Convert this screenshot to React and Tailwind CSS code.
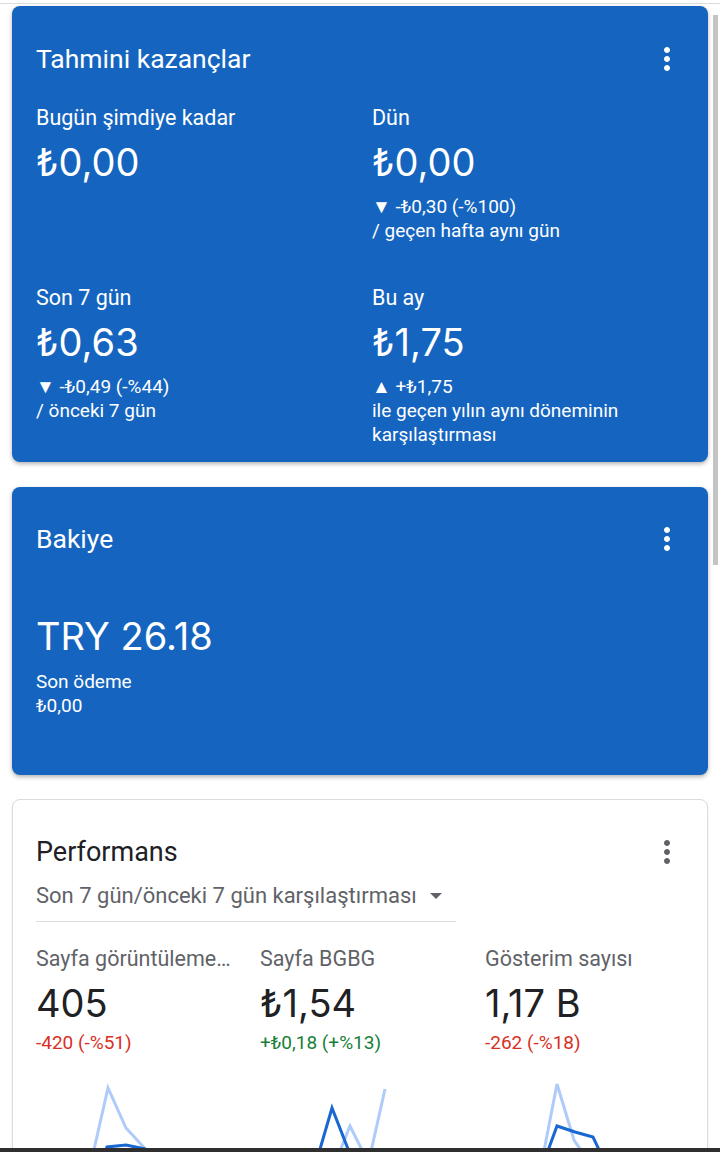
import React from 'react';

const font = { fontFamily: 'Roboto, "Noto Sans", sans-serif' };
const numFont = { fontFamily: 'Inter, Roboto, "Noto Sans", sans-serif' };

// vertical three-dot menu
const MoreIcon = ({ className }) => (
    <svg viewBox="0 0 24 24" className={className} fill="currentColor">
        <path d="M12 8c1.1 0 2-.9 2-2s-.9-2-2-2-2 .9-2 2 .9 2 2 2zm0 2c-1.1 0-2 .9-2 2s.9 2 2 2 2-.9 2-2-.9-2-2-2zm0 6c-1.1 0-2 .9-2 2s.9 2 2 2 2-.9 2-2-.9-2-2-2z" />
    </svg>
);

const CardHeader = ({ title, titleClass, iconClass }) => (
    <div className="flex items-center justify-between h-[32px]">
        <h2 className={`leading-[32px] ${titleClass}`}>{title}</h2>
        <MoreIcon className={`w-[36px] h-[36px] -my-[2px] ${iconClass}`} />
    </div>
);

const Stat = ({ label, value, lines = [] }) => (
    <div className="flex flex-col">
        <div className="text-[21.5px] leading-[24px]">{label}</div>
        <div className="text-[38px] leading-[48px] mt-[8px]" style={numFont}>{value}</div>
        {lines.length > 0 && (
            <div className="mt-[9px] text-[19px] leading-[24px]">
                {lines.map((l, i) => (
                    <div key={i}>{l}</div>
                ))}
            </div>
        )}
    </div>
);

const Spark = ({ light, dark }) => (
    <svg width="224" height="80" className="block overflow-visible">
        {light.map((pts, i) => (
            <polyline key={i} points={pts} fill="none" stroke="#aecbfa" strokeWidth="3" strokeLinejoin="miter" />
        ))}
        <polyline points={dark} fill="none" stroke="#1967d2" strokeWidth="3" strokeLinejoin="miter" />
    </svg>
);

const metrics = [
    {
        label: 'Sayfa görüntülemeleri',
        value: '405',
        delta: '-420 (-%51)',
        color: 'text-[#d93025]',
        light: ['57,77 72,11 90,51 114,77'],
        dark: '68,77 71,70 90,68 109,72 116,79',
    },
    {
        label: 'Sayfa BGBG',
        value: '₺1,54',
        delta: '+₺0,18 (+%13)',
        color: 'text-[#188038]',
        light: ['78,79 90,49 104,77', '110,79 125,12'],
        dark: '58,79 72,31 90,77',
    },
    {
        label: 'Gösterim sayısı',
        value: '1,17 B',
        delta: '-262 (-%18)',
        color: 'text-[#d93025]',
        light: ['58,79 72,7 89,63 100,79'],
        dark: '61,79 72,49 90,55 108,60 117,79',
    },
];

export default function App() {
    return (
        <div className="relative h-[1152px] w-[720px] bg-white flex flex-col overflow-hidden" style={font}>
            <div className="h-[4px] border-b border-[#dcdcdc] shrink-0"></div>

            <div className="flex-1 overflow-hidden flex flex-col px-[12px] pt-[2px]">
                {/* Tahmini kazançlar */}
                <div className="bg-[#1565c0] text-white rounded-[8px] shadow-[0_2px_4px_rgba(0,0,0,0.3)] pl-[24px] pr-[23px] pt-[37px] pb-[15px] shrink-0">
                    <CardHeader title="Tahmini kazançlar" titleClass="text-[26.5px]" iconClass="text-white" />
                    <div className="grid grid-cols-[336px_1fr] gap-y-[43px] mt-[31px]">
                        <Stat label="Bugün şimdiye kadar" value="₺0,00" />
                        <Stat label="Dün" value="₺0,00" lines={['▼ -₺0,30 (-%100)', '/ geçen hafta aynı gün']} />
                        <Stat label="Son 7 gün" value="₺0,63" lines={['▼ -₺0,49 (-%44)', '/ önceki 7 gün']} />
                        <Stat
                            label="Bu ay"
                            value="₺1,75"
                            lines={['▲ +₺1,75', 'ile geçen yılın aynı döneminin', 'karşılaştırması']}
                        />
                    </div>
                </div>

                {/* Bakiye */}
                <div className="mt-[25px] bg-[#1565c0] text-white rounded-[8px] shadow-[0_2px_4px_rgba(0,0,0,0.3)] pl-[24px] pr-[23px] pt-[36px] pb-[57px] shrink-0">
                    <CardHeader title="Bakiye" titleClass="text-[26.5px]" iconClass="text-white" />
                    <div className="text-[38px] leading-[48px] mt-[57px]" style={numFont}>TRY 26.18</div>
                    <div className="text-[19px] leading-[24px] mt-[10px]">
                        <div>Son ödeme</div>
                        <div>₺0,00</div>
                    </div>
                </div>

                {/* Performans */}
                <div className="mt-[24px] bg-white border border-[#dadce0] rounded-[8px] shadow-[0_1px_2px_rgba(0,0,0,0.12)] pl-[23px] pr-[22px] pt-[36px] shrink-0 h-[400px]">
                    <CardHeader title="Performans" titleClass="text-[27px] text-[#202124]" iconClass="text-[#5f6368]" />
                    <div className="mt-[16px] w-[420px] border-b border-[#dadce0] pb-[13px] flex items-center text-[#5f6368]">
                        <span className="text-[22px] leading-[24px]">Son 7 gün/önceki 7 gün karşılaştırması</span>
                        <svg viewBox="0 0 10 5" className="w-[12px] h-[6px] ml-[13px]" fill="#5f6368">
                            <path d="M0 0 L10 0 L5 5 Z" />
                        </svg>
                    </div>
                    <div className="grid grid-cols-[224px_225px_1fr] mt-[25px]">
                        {metrics.map((m) => (
                            <div key={m.label} className="flex flex-col min-w-0">
                                <div className="text-[21.5px] leading-[24px] text-[#5f6368] truncate pr-[26px]">{m.label}</div>
                                <div className="text-[38px] leading-[48px] text-[#202124] mt-[8px]" style={numFont}>{m.value}</div>
                                <div className={`text-[19px] leading-[24px] mt-[4px] ${m.color}`}>{m.delta}</div>
                                <div className="mt-[22px]">
                                    <Spark light={m.light} dark={m.dark} />
                                </div>
                            </div>
                        ))}
                    </div>
                </div>
            </div>

            <div className="h-[4px] bg-[#2f2f2f] shrink-0"></div>

            {/* scrollbar overlay */}
            <div className="absolute right-[2px] top-[15px] w-[5px] h-[550px] bg-[#c4c4c4]"></div>
        </div>
    );
}
